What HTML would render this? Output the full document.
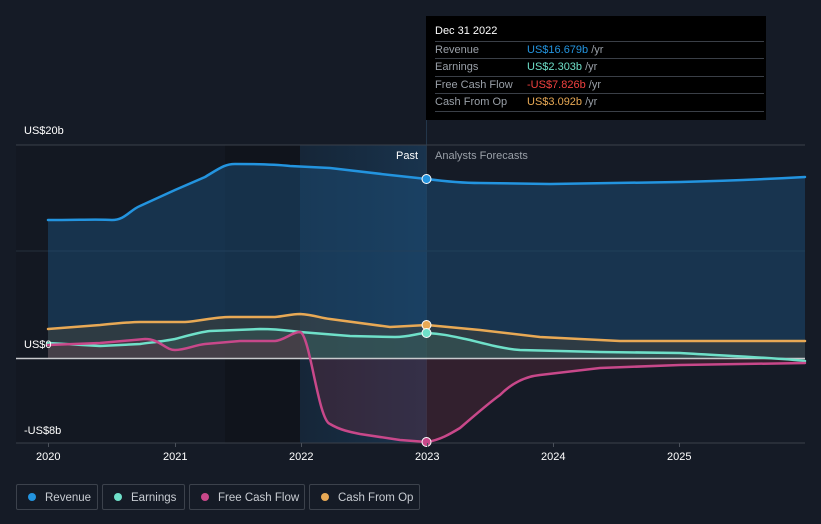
<!DOCTYPE html>
<html><head><meta charset="utf-8"><style>
body{margin:0;background:#151b26;width:821px;height:524px;overflow:hidden;font-family:"Liberation Sans",sans-serif;}
.tt{position:absolute;left:426px;top:16px;width:340px;height:104px;background:#000;}
.tt .h{position:absolute;left:9px;top:9px;color:#fff;font-size:11px;}
.row{position:absolute;left:9px;width:329px;height:17px;border-top:1px solid #3a3f47;font-size:11px;color:#9aa0a8;line-height:17px;}
.row span{position:absolute;left:92px;}
.row i{font-style:normal;color:#9aa0a8;}
.leg{position:absolute;top:484px;height:26px;border:1px solid #3c424c;border-radius:2px;color:#c8ccd2;font-size:11.5px;line-height:26px;box-sizing:border-box;}
.leg b{display:inline-block;width:8px;height:8px;border-radius:50%;margin:0 9px 0 11px;vertical-align:0px;}
.ax{position:absolute;color:#fff;font-size:11px;}
</style></head><body>
<svg width="821" height="524" style="position:absolute;left:0;top:0">
<defs>
<linearGradient id="hl" x1="0" x2="1"><stop offset="0" stop-color="#16314a" stop-opacity=".5"/><stop offset="1" stop-color="#1a3a58" stop-opacity=".8"/></linearGradient>
</defs>
<rect x="16" y="145" width="284" height="298" fill="#131822"/>
<rect x="225" y="145" width="75" height="298" fill="#10141c"/>
<rect x="300" y="145" width="127" height="298" fill="url(#hl)"/>
<line x1="426.5" y1="120" x2="426.5" y2="443" stroke="#23364a" stroke-width="1"/>
<line x1="16" y1="145" x2="805" y2="145" stroke="#3a404a"/>
<line x1="16" y1="251" x2="805" y2="251" stroke="#26303c"/>
<line x1="16" y1="443" x2="805" y2="443" stroke="#3a404a"/>
<path d="M48,220 C80,220 100,219 112,220 C125,220 130,210 140,206 L175,190 L205,177 C220,168 225,164 235,164 C260,164 280,165 290,166 L330,168 L390,175 L427,179 C450,182 470,183 480,183 L550,184 L680,182 C720,181 770,179 805,177 L805,358 L48,358Z" fill="#1b4e78" fill-opacity=".5"/>
<path d="M48,329 L100,325 C120,323 130,322 140,322 L185,322 C200,321 215,317 230,317 L275,317 C285,316 292,314 300,314 C315,315 320,318 330,319 L390,327 L427,325 L480,330 L540,337 L620,341 L805,341 L805,358 L48,358Z" fill="#5a4a30" fill-opacity=".35"/>
<path d="M48,343 L100,346 L140,344 C155,342 165,341 175,339 C190,335 200,332 210,331 L260,329 C280,329 290,331 300,332 L350,336 L395,337 C410,337 418,333 427,333 C445,334 455,337 470,340 C490,345 505,349 520,350 L600,352 L680,353 C730,356 780,358 805,361 L805,358 L48,358Z" fill="#3a6a60" fill-opacity=".35"/>
<path d="M48,345 L100,343 L145,339 C160,339 165,350 175,350 C185,350 195,345 205,344 L240,341 L275,341 C285,340 292,332 300,332 C310,334 318,420 330,424 C340,430 350,432 360,434 L400,440 L427,442 C440,440 450,434 460,428 C475,415 490,402 500,395 C515,380 530,376 540,375 L600,368 L680,365 L805,363 L805,358 L48,358Z" fill="#6a2a40" fill-opacity=".35"/>
<line x1="16" y1="358.5" x2="805" y2="358.5" stroke="#c8cacd" stroke-width="1.5"/>
<g fill="none" stroke-width="2.5" stroke-linecap="round">
<path d="M48,220 C80,220 100,219 112,220 C125,220 130,210 140,206 L175,190 L205,177 C220,168 225,164 235,164 C260,164 280,165 290,166 L330,168 L390,175 L427,179 C450,182 470,183 480,183 L550,184 L680,182 C720,181 770,179 805,177" stroke="#2394df"/>
<path d="M48,329 L100,325 C120,323 130,322 140,322 L185,322 C200,321 215,317 230,317 L275,317 C285,316 292,314 300,314 C315,315 320,318 330,319 L390,327 L427,325 L480,330 L540,337 L620,341 L805,341" stroke="#e8a955"/>
<path d="M48,343 L100,346 L140,344 C155,342 165,341 175,339 C190,335 200,332 210,331 L260,329 C280,329 290,331 300,332 L350,336 L395,337 C410,337 418,333 427,333 C445,334 455,337 470,340 C490,345 505,349 520,350 L600,352 L680,353 C730,356 780,358 805,361" stroke="#6fe0c9"/>
<path d="M48,345 L100,343 L145,339 C160,339 165,350 175,350 C185,350 195,345 205,344 L240,341 L275,341 C285,340 292,332 300,332 C310,334 318,420 330,424 C340,430 350,432 360,434 L400,440 L427,442 C440,440 450,434 460,428 C475,415 490,402 500,395 C515,380 530,376 540,375 L600,368 L680,365 L805,363" stroke="#c8488a"/>
</g>
<g stroke="#fff" stroke-width="1">
<circle cx="426.5" cy="179" r="4.5" fill="#2394df"/>
<circle cx="426.5" cy="325" r="4.5" fill="#e8a955"/>
<circle cx="426.5" cy="333" r="4.5" fill="#6fe0c9"/>
<circle cx="426.5" cy="442" r="4.5" fill="#c8488a"/>
</g>
<g stroke="#4a505a"><line x1="48.5" y1="443" x2="48.5" y2="447"/><line x1="175.5" y1="443" x2="175.5" y2="447"/><line x1="301.5" y1="443" x2="301.5" y2="447"/><line x1="427.5" y1="443" x2="427.5" y2="447"/><line x1="553.5" y1="443" x2="553.5" y2="447"/><line x1="679.5" y1="443" x2="679.5" y2="447"/></g>
</svg>
<div class="ax" style="left:24px;top:125px">US$20b</div>
<div class="ax" style="left:24px;top:339px">US$0</div>
<div class="ax" style="left:24px;top:425px">-US$8b</div>
<div class="ax" style="left:396px;top:150px">Past</div>
<div class="ax" style="left:435px;top:150px;color:#9aa0a8">Analysts Forecasts</div>
<div class="ax" style="left:36px;top:451px">2020</div>
<div class="ax" style="left:163px;top:451px">2021</div>
<div class="ax" style="left:289px;top:451px">2022</div>
<div class="ax" style="left:415px;top:451px">2023</div>
<div class="ax" style="left:541px;top:451px">2024</div>
<div class="ax" style="left:667px;top:451px">2025</div>
<div class="tt"><div class="h">Dec 31 2022</div>
<div class="row" style="top:25px">Revenue<span><b style="font-weight:normal;color:#2394df">US$16.679b</b> <i>/yr</i></span></div>
<div class="row" style="top:42px">Earnings<span><b style="font-weight:normal;color:#6fe0c9">US$2.303b</b> <i>/yr</i></span></div>
<div class="row" style="top:60px">Free Cash Flow<span><b style="font-weight:normal;color:#f0413f">-US$7.826b</b> <i>/yr</i></span></div>
<div class="row" style="top:77px;border-bottom:1px solid #3a3f47">Cash From Op<span><b style="font-weight:normal;color:#e8a955">US$3.092b</b> <i>/yr</i></span></div>
</div>
<div class="leg" style="left:16px;width:82px"><b style="background:#2394df"></b>Revenue</div>
<div class="leg" style="left:102px;width:83px"><b style="background:#6fe0c9"></b>Earnings</div>
<div class="leg" style="left:189px;width:116px"><b style="background:#c8488a"></b>Free Cash Flow</div>
<div class="leg" style="left:309px;width:111px"><b style="background:#e8a955"></b>Cash From Op</div>
</body></html>
